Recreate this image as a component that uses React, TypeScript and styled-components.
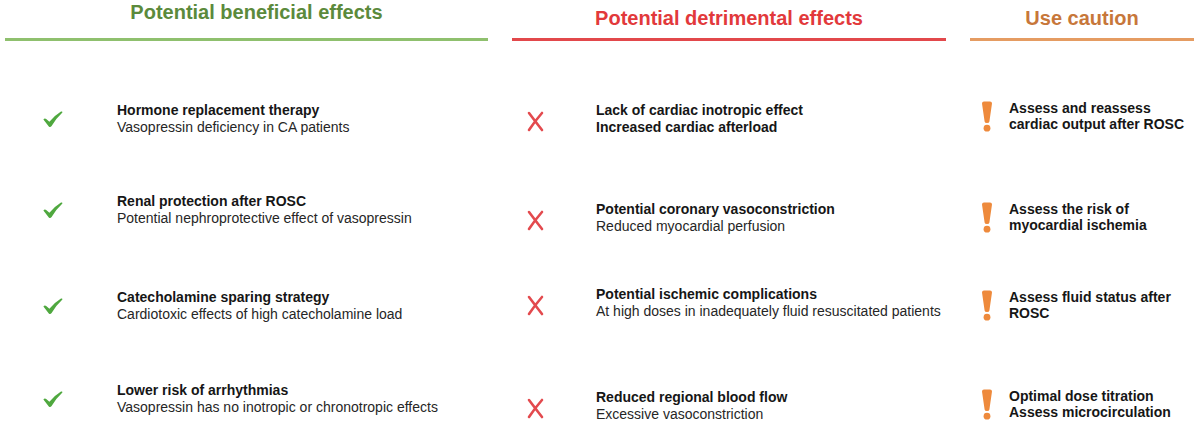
import React from "react";
import styled, { createGlobalStyle } from "styled-components";

const GlobalStyle = createGlobalStyle`
  body {
    margin: 0;
    background: #ffffff;
    font-family: "Liberation Sans", Arial, sans-serif;
  }
`;

type Kind = "good" | "bad" | "caution";

const palette: Record<Kind, { head: string; rule: string; icon: string }> = {
  good: { head: "#5b8a3c", rule: "#8fc06e", icon: "#4fa83f" },
  bad: { head: "#e2393b", rule: "#e2484b", icon: "#e34a4e" },
  caution: { head: "#c7773a", rule: "#e59c62", icon: "#ee8a3c" },
};

const Page = styled.div`
  width: 1200px;
  height: 430px;
  box-sizing: border-box;
  padding-left: 5px;
  display: grid;
  grid-template-columns: 483px 434px 224px;
  column-gap: 24px;
  overflow: hidden;
`;

const Column = styled.section`
  display: flex;
  flex-direction: column;
`;

const HeadBox = styled.div<{ $top: number; $shift: number }>`
  height: 38px;
  box-sizing: border-box;
  padding-top: ${(p) => p.$top}px;
  padding-left: ${(p) => p.$shift}px;
  text-align: center;
`;

const Heading = styled.h2<{ $kind: Kind }>`
  margin: 0;
  font-size: 20px;
  line-height: 24px;
  font-weight: 700;
  color: ${(p) => palette[p.$kind].head};
`;

const Rule = styled.div<{ $kind: Kind }>`
  height: 3px;
  background: ${(p) => palette[p.$kind].rule};
`;

const Item = styled.div<{ $gap: number; $iconCol: number }>`
  margin-top: ${(p) => p.$gap}px;
  display: grid;
  grid-template-columns: ${(p) => p.$iconCol}px 1fr;
  align-items: center;
`;

const IconBox = styled.div<{ $inset: number }>`
  padding-left: ${(p) => p.$inset}px;
  display: flex;
  align-items: center;
`;

const Text = styled.div<{ $lh: number }>`
  font-size: 14px;
  line-height: ${(p) => p.$lh}px;
`;

const Title = styled.div`
  font-weight: 700;
  color: #161616;
  white-space: nowrap;
`;

const Sub = styled.div<{ $bold?: boolean }>`
  font-weight: ${(p) => (p.$bold ? 700 : 400)};
  color: ${(p) => (p.$bold ? "#161616" : "#262626")};
  white-space: nowrap;
`;

// brush-like tick: short arm thin, long arm thicker
const Check = () => (
  <svg width="20" height="17" viewBox="0 0 20 17">
    <path
      d="M0.4 8.6 Q1.6 6.8 3.2 8 L6.4 10.8 Q11 5 18 0.6 Q19.6 0 19.4 1.6 Q13 7.6 8.6 15 Q7.2 16.8 5.8 15.4 Z"
      fill={palette.good.icon}
    />
  </svg>
);

const Cross = () => (
  <svg width="17" height="21" viewBox="0 0 17 21" style={{ marginTop: 4 }}>
    <path
      d="M2 2 Q8 10 15 19 M15 2 Q8 10 2 19"
      fill="none"
      stroke={palette.bad.icon}
      strokeWidth="2.6"
      strokeLinecap="round"
    />
  </svg>
);

const Bang = () => (
  <svg width="12" height="31" viewBox="0 0 12 31">
    <path
      d="M1 2.5 Q1 0.5 3 0.5 L9 0.5 Q11 0.5 11 2.5 L8.4 20.5 Q8.2 22 6 22 Q3.8 22 3.6 20.5 Z"
      fill={palette.caution.icon}
    />
    <circle cx="6" cy="27.2" r="3.4" fill={palette.caution.icon} />
  </svg>
);

type Entry = { title: string; sub: string; gap: number; strong?: boolean };

type Col = {
  kind: Kind;
  heading: string;
  headTop: number;
  headShift: number;
  iconCol: number;
  iconInset: number;
  lineHeight: number;
  items: Entry[];
};

const columns: Col[] = [
  {
    kind: "good",
    heading: "Potential beneficial effects",
    headTop: 0,
    headShift: 20,
    iconCol: 112,
    iconInset: 38,
    lineHeight: 17,
    items: [
      { title: "Hormone replacement therapy", sub: "Vasopressin deficiency in CA patients", gap: 61 },
      { title: "Renal protection after ROSC", sub: "Potential nephroprotective effect of vasopressin", gap: 57 },
      { title: "Catecholamine sparing strategy", sub: "Cardiotoxic effects of high catecholamine load", gap: 62 },
      { title: "Lower risk of arrhythmias", sub: "Vasopressin has no inotropic or chronotropic effects", gap: 59 },
    ],
  },
  {
    kind: "bad",
    heading: "Potential detrimental effects",
    headTop: 6,
    headShift: 0,
    iconCol: 84,
    iconInset: 15,
    lineHeight: 17,
    items: [
      { title: "Lack of cardiac inotropic effect", sub: "Increased cardiac afterload", gap: 61, strong: true },
      { title: "Potential coronary vasoconstriction", sub: "Reduced myocardial perfusion", gap: 65 },
      { title: "Potential ischemic complications", sub: "At high doses in inadequately fluid resuscitated patients", gap: 51 },
      { title: "Reduced regional blood flow", sub: "Excessive vasoconstriction", gap: 69 },
    ],
  },
  {
    kind: "caution",
    heading: "Use caution",
    headTop: 6,
    headShift: 0,
    iconCol: 39,
    iconInset: 11,
    lineHeight: 16,
    items: [
      { title: "Assess and reassess", sub: "cardiac output after ROSC", gap: 59, strong: true },
      { title: "Assess the risk of", sub: "myocardial ischemia", gap: 69, strong: true },
      { title: "Assess fluid status after", sub: "ROSC", gap: 56, strong: true },
      { title: "Optimal dose titration", sub: "Assess microcirculation", gap: 67, strong: true },
    ],
  },
];

const icons: Record<Kind, () => React.ReactElement> = {
  good: Check,
  bad: Cross,
  caution: Bang,
};

export default function App() {
  return (
    <>
      <GlobalStyle />
      <Page>
        {columns.map((col) => {
          const Icon = icons[col.kind];
          return (
            <Column key={col.kind}>
              <HeadBox $top={col.headTop} $shift={col.headShift}>
                <Heading $kind={col.kind}>{col.heading}</Heading>
              </HeadBox>
              <Rule $kind={col.kind} />
              {col.items.map((it) => (
                <Item key={it.title} $gap={it.gap} $iconCol={col.iconCol}>
                  <IconBox $inset={col.iconInset}>
                    <Icon />
                  </IconBox>
                  <Text $lh={col.lineHeight}>
                    <Title>{it.title}</Title>
                    <Sub $bold={it.strong}>{it.sub}</Sub>
                  </Text>
                </Item>
              ))}
            </Column>
          );
        })}
      </Page>
    </>
  );
}
